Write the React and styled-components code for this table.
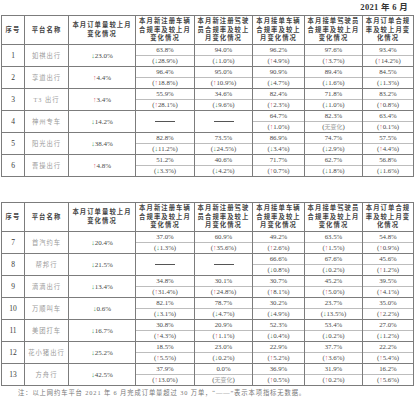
import React from "react";
import styled, { createGlobalStyle } from "styled-components";

const Global = createGlobalStyle`
  html, body { margin: 0; padding: 0; background: #fff; }
  body { font-family: "Liberation Serif", "Noto Sans CJK SC", serif; }
`;

const Page = styled.div`
  width: 418px;
  height: 400px;
  padding-left: 1px;
  box-sizing: border-box;
  overflow: hidden;
`;

const DateLine = styled.div`
  height: 15px;
  line-height: 14px;
  text-align: right;
  padding-right: 10px;
  font-size: 8.5px;
  font-weight: bold;
  color: #333;
  letter-spacing: 0.3px;
`;

const Table = styled.table`
  border-collapse: collapse;
  table-layout: fixed;
  width: 412px;
  margin-top: ${(p) => p.$mt || 0}px;
`;

const Col = styled.col`
  width: ${(p) => p.$w}px;
`;

const Th = styled.th`
  height: ${(p) => p.$h}px;
  border: 1px solid #7c7c7c;
  padding: 0 2px;
  font-size: 6.3px;
  line-height: 8.6px;
  letter-spacing: 1.1px;
  font-weight: 600;
  color: #444;
  text-align: center;
  vertical-align: middle;
  word-break: break-all;
`;

const Td = styled.td`
  height: 21px;
  border: 1px solid #7c7c7c;
  padding: 0;
  text-align: center;
  vertical-align: middle;
  font-size: 7px;
  color: #4a4a4a;
`;

const Name = styled.span`
  font-size: 6.3px;
  letter-spacing: 1px;
  color: #9a9a9a;
`;

const No = styled.span`
  font-size: 7.5px;
  color: #3a3a3a;
`;

const Split = styled.div`
  display: flex;
  flex-direction: column;
`;

const Half = styled.div`
  height: 10px;
  line-height: 10px;
  font-size: 6.8px;
  color: #4a4a4a;
  border-bottom: ${(p) => (p.$top ? "1px solid #bdbdbd" : "none")};
`;

const Arrow = styled.span`
  color: ${(p) => (p.$up ? "#e0607a" : "#3c9c60")};
  font-size: 7px;
`;

const Flat = styled.span`
  color: #a0a0a0;
  font-size: 6px;
`;

const Dash = styled.span`
  display: inline-block;
  width: 20px;
  border-top: 1px solid #555;
  vertical-align: middle;
`;

const Note = styled.div`
  margin-top: 2px;
  padding-left: 17px;
  font-size: 6.3px;
  letter-spacing: 0.9px;
  color: #777;
  white-space: nowrap;
`;

const Change = ({ v }) => {
  if (v === "无变化") return <Flat>无变化</Flat>;
  const up = v[0] === "↑";
  return (
    <>
      <Arrow $up={up}>{v[0]}</Arrow>
      {v.slice(1)}
    </>
  );
};

const headers = [
  "序号",
  "平台名称",
  "本月订单量较上月变化情况",
  "本月新注册车辆合规率及较上月变化情况",
  "本月新注册驾驶员合规率及较上月变化情况",
  "本月接单车辆合规率及较上月变化情况",
  "本月接单驾驶员合规率及较上月变化情况",
  "本月订单合规率及较上月变化情况",
];

const widths = [23, 44, 67, 59, 58, 52, 58, 51];

const t1 = [
  ["1", "如祺出行", "↓23.0%", ["63.8%", "↓28.9%"], ["94.0%", "↓1.0%"], ["96.2%", "↑4.9%"], ["97.6%", "↑3.7%"], ["93.4%", "↑14.2%"]],
  ["2", "享道出行", "↑4.4%", ["96.4%", "↑18.8%"], ["95.0%", "↑10.9%"], ["90.9%", "↓4.7%"], ["89.4%", "↓1.6%"], ["84.5%", "↓1.3%"]],
  ["3", "T3 出行", "↑3.4%", ["55.9%", "↑28.1%"], ["34.6%", "↓9.6%"], ["82.4%", "↑2.3%"], ["71.8%", "↓1.0%"], ["83.2%", "↑0.8%"]],
  ["4", "神州专车", "↓14.2%", null, null, ["64.7%", "↑1.0%"], ["82.3%", "无变化"], ["63.4%", "↑0.1%"]],
  ["5", "阳光出行", "↓38.4%", ["82.8%", "↓11.2%"], ["73.5%", "↓24.5%"], ["86.9%", "↓3.4%"], ["74.7%", "↓2.9%"], ["57.5%", "↑4.4%"]],
  ["6", "曹操出行", "↑4.8%", ["51.2%", "↓3.3%"], ["40.6%", "↓4.2%"], ["71.7%", "↑0.7%"], ["62.7%", "↓1.8%"], ["56.8%", "↓1.6%"]],
];

const t2 = [
  ["7", "首汽约车", "↓20.4%", ["37.0%", "↓1.3%"], ["60.9%", "↑35.6%"], ["49.2%", "↑2.6%"], ["63.5%", "↑1.5%"], ["54.8%", "↑0.9%"]],
  ["8", "帮邦行", "↓21.5%", null, null, ["66.6%", "↓0.8%"], ["67.6%", "↓0.2%"], ["45.6%", "↑1.2%"]],
  ["9", "滴滴出行", "↓13.4%", ["34.8%", "↑31.4%"], ["30.1%", "↑24.8%"], ["30.7%", "↑8.1%"], ["45.2%", "↑5.0%"], ["39.5%", "↑4.1%"]],
  ["10", "万顺叫车", "↓0.6%", ["82.1%", "↓3.1%"], ["78.7%", "↓4.7%"], ["30.2%", "↓4.9%"], ["23.7%", "↓13.5%"], ["35.0%", "↑2.2%"]],
  ["11", "美团打车", "↓16.7%", ["30.8%", "↑4.3%"], ["20.9%", "↑1.1%"], ["52.3%", "↓0.4%"], ["53.4%", "↓0.2%"], ["27.0%", "↓1.2%"]],
  ["12", "花小猪出行", "↓25.2%", ["18.5%", "↑5.5%"], ["23.0%", "↓0.2%"], ["22.9%", "↑5.2%"], ["37.7%", "↑3.6%"], ["22.2%", "↑5.4%"]],
  ["13", "方舟行", "↓42.5%", ["37.9%", "↑13.0%"], ["0.0%", "无变化"], ["36.9%", "↑0.5%"], ["31.9%", "↑0.2%"], ["16.2%", "↑5.6%"]],
];

const DataTable = ({ rows, headH, mt }) => (
  <Table $mt={mt}>
    <colgroup>
      {widths.map((w, i) => (
        <Col key={i} $w={w} />
      ))}
    </colgroup>
    <thead>
      <tr>
        {headers.map((h, i) => (
          <Th key={i} $h={headH}>
            {h}
          </Th>
        ))}
      </tr>
    </thead>
    <tbody>
      {rows.map((r) => (
        <tr key={r[0]}>
          <Td>
            <No>{r[0]}</No>
          </Td>
          <Td>
            <Name>{r[1]}</Name>
          </Td>
          <Td>
            <Change v={r[2]} />
          </Td>
          {r.slice(3).map((c, i) => (
            <Td key={i}>
              {c ? (
                <Split>
                  <Half $top>{c[0]}</Half>
                  <Half>
                    (<Change v={c[1]} />)
                  </Half>
                </Split>
              ) : (
                <Dash />
              )}
            </Td>
          ))}
        </tr>
      ))}
    </tbody>
  </Table>
);

export default function App() {
  return (
    <Page>
      <Global />
      <DateLine>2021 年 6 月</DateLine>
      <DataTable rows={t1} headH={28} mt={0} />
      <DataTable rows={t2} headH={28} mt={25} />
      <Note>注：以上网约车平台 2021 年 6 月完成订单量超过 30 万单，“——”表示本项指标无数据。</Note>
    </Page>
  );
}
